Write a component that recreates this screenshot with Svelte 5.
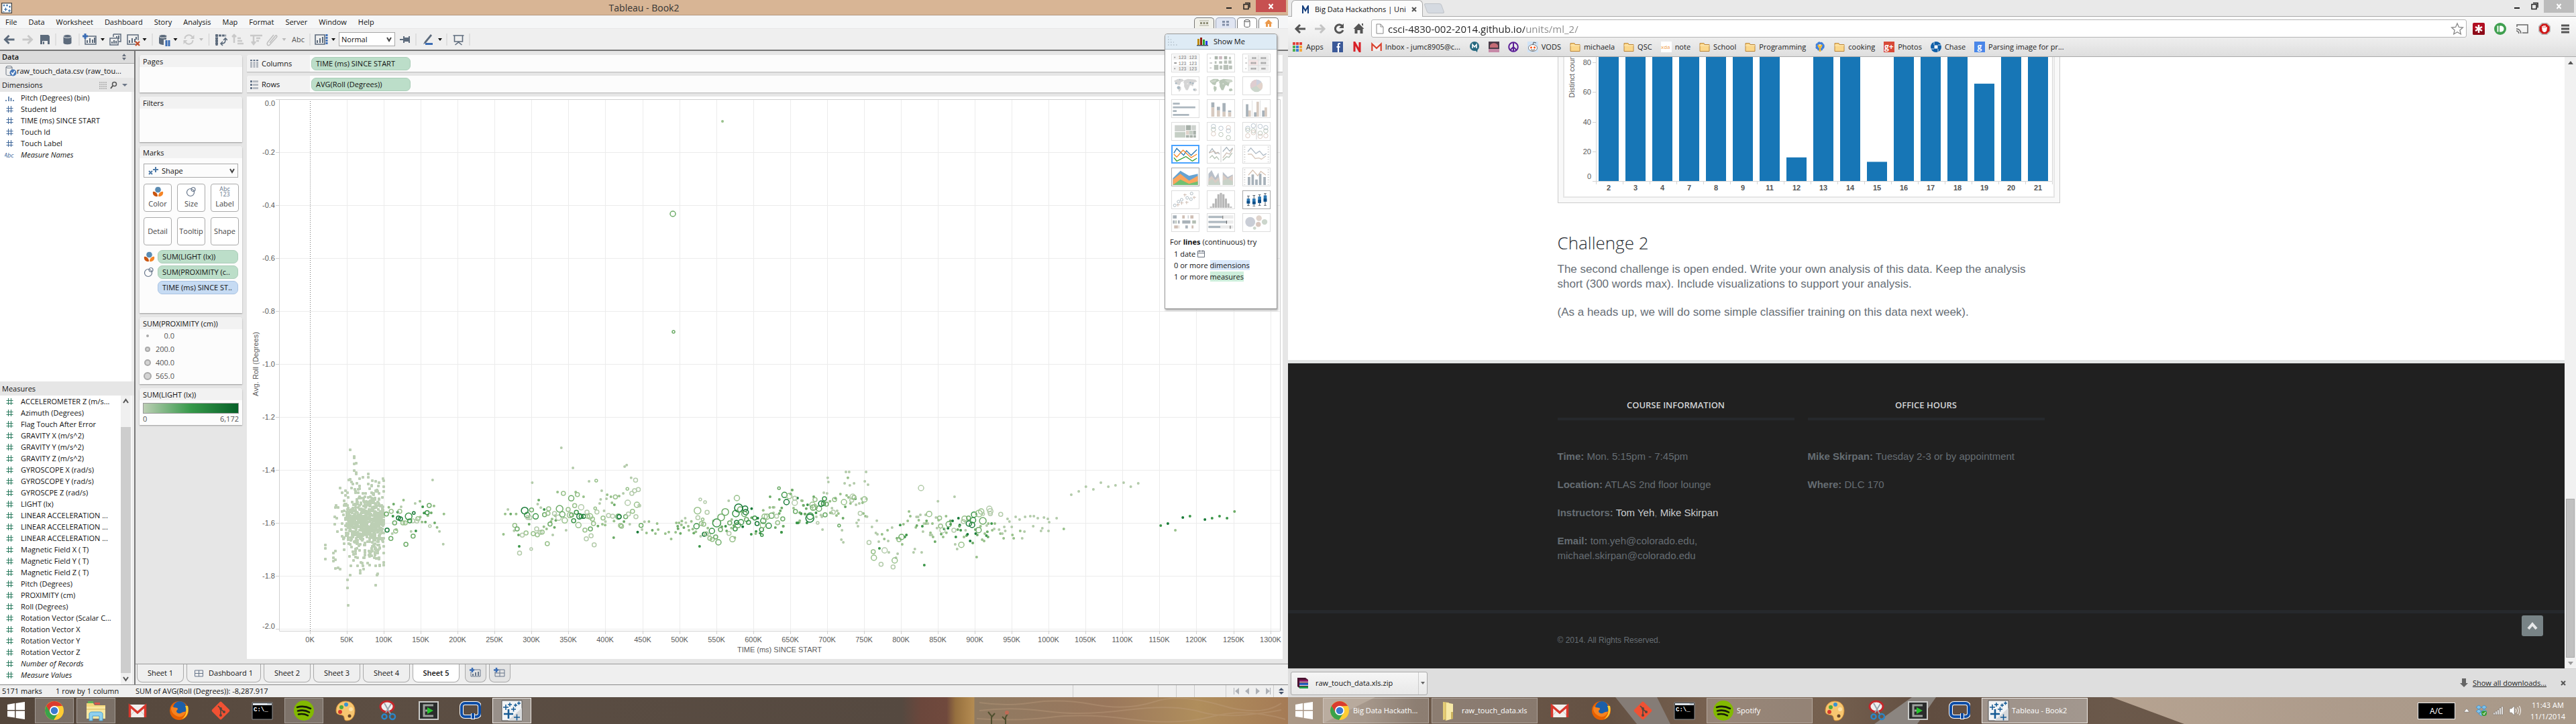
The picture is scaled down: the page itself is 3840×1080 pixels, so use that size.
<script>
  const menus = ['File', 'Data', 'Worksheet', 'Dashboard', 'Story', 'Analysis', 'Map', 'Format', 'Server', 'Window', 'Help'];
  const toolsLeft = [
    ['back', 29], ['forward', 23], ['save', 30], ['sep', 2], ['cylinder', 33], ['sep', 2], ['newsheet', 30], ['caret', 8],
    ['duplicate', 30], ['clear', 24], ['caret', 9], ['sep', 14], ['pause', 22], ['caret', 11], ['refresh', 29], ['caretoff', 8],
    ['sep', 15], ['swap', 20], ['asc', 32], ['desc', 22], ['clip', 24], ['caretoff', 13], ['abc', 29], ['sep', 6], ['fit', 28], ['caret', 8]
  ];
  const toolsRight = [['pin', 30], ['sep', 2], ['pen', 32], ['caret', 6], ['sep', 14], ['present', 21], ['sep', 12]];

  const dimensions = [
    ['bars', 'Pitch (Degrees) (bin)'], ['#', 'Student Id'], ['#', 'TIME (ms) SINCE START'],
    ['#', 'Touch Id'], ['#', 'Touch Label'], ['Abc', 'Measure Names']
  ];
  const measures = [
    'ACCELEROMETER Z (m/s...', 'Azimuth (Degrees)', 'Flag Touch After Error', 'GRAVITY X (m/s^2)', 'GRAVITY Y (m/s^2)',
    'GRAVITY Z (m/s^2)', 'GYROSCOPE X (rad/s)', 'GYROSCOPE Y (rad/s)', 'GYROSCPE Z (rad/s)', 'LIGHT (lx)',
    'LINEAR ACCELERATION ...', 'LINEAR ACCELERATION ...', 'LINEAR ACCELERATION ...', 'Magnetic Field X ( T)',
    'Magnetic Field Y ( T)', 'Magnetic Field Z ( T)', 'Pitch (Degrees)', 'PROXIMITY (cm)', 'Roll (Degrees)',
    'Rotation Vector (Scalar C...', 'Rotation Vector X', 'Rotation Vector Y', 'Rotation Vector Z',
    'Number of Records', 'Measure Values'
  ];
  const legend = [['0.0', 1], ['200.0', 3], ['400.0', 4], ['565.0', 5]];
  const sheets = ['Sheet 1', 'Dashboard 1', 'Sheet 2', 'Sheet 3', 'Sheet 4', 'Sheet 5'];

  const shades = ['#b3cbaa', '#98c18b', '#6dac68', '#3c9649', '#177a37'];
  const parse = (s) => s.trim().split(/[;\s]+/).filter(Boolean).map((p) => p.split(',').map(Number));
  const early = (x) => 400 + x / 1.96;
  const late = (x) => 1150 + x / 2.063;
  const plotY = (y) => 640 + y / 3;

  const earlyRings = parse(`345,380,3,2;359,368,3,1;384,368,3,1;410,391,5,3;380,398,3,4;386,402,3,4;425,376,2,4;470,342,3,2;464,374,3,3;437,401,3,1;434,412,3,0;422,411,3,0;413,411,3,3;369,420,3,2;393,420,3,1;400,420,3,1;347,452,3,4;372,457,3,1;358,490,3,2;423,479,3,2;402,516,3,2;472,434,2,0
    749,365,5,4;769,362,3,2;756,385,4,3;781,391,4,3;758,396,3,0;764,397,3,0;720,431,3,1;727,447,3,2;753,465,3,1;742,475,3,0;734,555,3,0;768,537,2,0;774,468,3,1;784,447,3,0;786,473,3,1;794,463,3,0;800,461,3,1;815,513,3,1;823,425,3,2;807,383,3,2;817,377,3,1;819,357,3,1;836,378,3,0;848,397,4,0;851,357,5,2;859,382,4,2;862,288,3,1;885,310,4,2;866,409,4,1;876,360,3,1;881,385,4,1;886,385,3,2;892,410,3,3;895,343,3,1;900,373,3,3;903,293,3,1;909,391,4,4;914,391,3,3;906,430,4,1;914,350,4,0;921,391,3,4;931,372,3,0;933,391,3,1;940,391,4,1;925,452,3,1;941,447,3,2;929,491,3,0;943,478,3,0;952,518,3,0;947,403,3,1;950,423,3,1;955,355,2,1;960,371,3,0;978,398,3,1;994,387,3,0;1006,390,3,0;1014,304,3,1;1023,392,4,2;1025,392,3,4;1029,431,3,1;1032,435,3,1;1044,392,3,2;1050,330,4,0;1049,268,2,1;1052,380,3,0;1062,288,3,0;1064,368,3,1;1070,276,3,0;1073,229,3,0;1081,271,3,0;1077,339,4,1;1084,343,2,0;1074,392,3,0;1089,431,3,2;958,231,2,1
    1254,365,5,1;1255,397,3,0;1282,373,3,0;1262,315,2,0;1276,327,2,0;1251,435,4,3;1265,423,3,1;1269,404,2,1;1272,426,3,1;1274,471,3,4;1279,469,3,1;1288,472,2,0;1290,489,3,1;1297,494,3,1;1296,456,4,3;1307,483,3,2;1315,507,4,2;1310,420,6,3;1321,450,3,2;1323,395,5,2;1335,371,5,2;1346,467,3,0;1348,420,3,2;1356,493,4,1;1364,447,3,3;1366,378,5,3;1369,309,4,1;1368,418,3,4;1374,353,6,4;1379,360,4,2;1372,430,4,2;1381,417,4,3;1393,356,4,4;1395,372,4,4;1391,380,4,2;1397,405,3,2;1403,418,3,3;1421,398,3,3;1428,423,3,4;1441,450,3,3;1442,475,2,3;1445,430,4,1;1446,411,4,3;1450,392,4,1;1457,392,4,1;1462,433,4,3;1470,388,4,2;1485,390,3,0;1488,419,3,1;1503,402,3,2;1492,265,2,2;1508,295,4,3;1514,327,4,4;1522,300,4,1;1538,310,3,0;1538,330,4,0;1540,369,3,2`);
  const earlyDots = parse(`366,336,2;395,318,1;388,348,0;352,350,1;364,390,3;378,372,4;429,333,0;443,323,1;451,348,3;455,376,3;476,375,2;484,344,1;513,380,1;486,420,2;493,440,1;500,458,0;511,515,0;480,228,0;449,416,1;459,416,2;431,456,3;417,458,0;362,468,0;374,450,1;444,394,1;466,388,1
    692,380,1;708,380,2;724,380,1;700,360,0;687,471,1;718,455,0;731,474,2;733,525,3;762,426,2;771,240,0;790,318,2;787,336,0;796,352,0;806,360,3;838,388,1;845,282,1;829,403,1;826,414,1;840,409,2;836,440,2;831,474,0;813,447,1;805,437,1;856,84,0;890,174,0;898,282,1;870,453,0;921,303,1;937,234,0;971,315,0;974,276,0;968,333,0;988,312,0;990,294,1;1001,303,1;1004,330,1;1011,339,2;1025,300,1;1037,288,0;981,366,0;976,426,1;984,430,1;985,414,0;963,434,2;1010,412,1;1009,486,2;1039,414,2;1056,426,0;1041,168,0;1047,161,0;1060,218,0;1079,461,4;1092,450,0;1099,415,0;1112,414,1;1105,465,1;1122,453,2;1131,468,1;1136,423,1;1139,450,1;1160,468,1;1170,461,1;1177,492,1;1190,462,1;1197,446,2;1204,467,2
    1218,399,0;1208,412,1;1200,420,1;1192,420,1;1196,435,2;1207,429,1;1214,441,2;1220,419,0;1227,435,1;1229,453,1;1236,413,1;1240,448,1;1243,466,2;1249,460,1;1263,480,0;1260,525,3;1284,443,1;1300,411,0;1345,321,0;1325,437,2;1336,435,3;1339,456,2;1353,443,1;1363,486,1;1360,432,2;1354,405,1;1386,437,4;1412,356,4;1412,397,2;1430,399,4;1411,471,3;1425,458,3;1437,466,3;1424,468,1;1446,364,1;1465,351,1;1478,350,0;1476,375,0;1466,303,2;1493,315,2;1500,353,2;1496,366,2;1499,462,2;1505,435,1;1530,273,1;1526,290,2;1546,309,4;1545,420,3;1551,418,1;1558,320,1;1564,342,1;1568,380,2;1557,380,1`);
  const lateRings = parse(`118,399,6,4;119,390,5,3;126,339,4,1;128,352,4,2;133,350,4,1;134,316,3,1;146,356,4,2;153,334,4,4;160,334,3,3;163,312,3,3;169,336,3,2;165,384,3,2;190,372,3,0;142,420,2,0;194,316,3,1;208,432,2,2;223,327,4,1;250,303,4,0;247,318,3,0;254,306,3,1;273,377,3,0;286,315,4,1;300,508,3,0;313,549,3,1;315,576,4,1;348,543,4,0;337,605,3,0;379,588,4,1;374,617,3,0;392,495,3,1;400,483,4,2;460,264,4,0;485,380,4,1;517,398,3,1;520,434,3,1;526,453,4,0;545,426,4,2;561,453,3,0;584,518,4,1;590,414,3,0;594,401,4,1;606,398,3,2;607,423,4,4;617,429,4,4;620,408,4,3;623,383,4,3;638,378,5,1;637,452,4,2;650,411,5,2;645,369,4,1;651,380,2,0;670,357,4,0;673,368,4,0;673,379,3,0;705,382,3,0`);
  const lateDots = parse(`111,339,3;107,356,2;130,303,2;95,321,1;98,341,2;103,380,2;91,378,3;87,374,2;109,420,3;78,420,3;82,420,3;87,410,1;137,375,3;138,393,0;152,385,0;155,393,0;157,450,0;161,285,0;171,288,0;173,218,0;175,237,0;180,323,1;186,354,0;181,375,1;185,376,1;200,387,1;202,366,0;206,378,1;197,310,2;212,291,1;220,399,2;217,453,0;215,495,0;221,507,0;225,243,0;229,192,0;239,192,0;235,218,1;241,252,0;254,243,0;231,297,1;237,306,1;243,333,1;227,348,2;258,312,3;260,339,0;262,420,0;268,407,0;266,435,0;270,333,0;277,312,0;280,330,1;283,378,1;289,390,1;294,392,0;291,192,0;287,234,0;297,249,0;292,312,0;309,438,0;324,410,0;321,465,0;326,471,0;330,504,0;332,534,3;340,471,1;347,492,1;357,453,1;359,501,0;361,552,0;371,441,0;383,576,0;388,558,0;386,489,2;396,430,3;406,426,1;402,516,1;410,483,3;415,474,3;419,411,1;423,369,1;427,390,1;437,552,0;441,537,0;462,552,0;470,609,3;444,440,1;447,432,2;446,393,0;451,393,0;458,384,0;453,408,1;464,435,3;466,459,0;469,423,0;474,384,0;477,411,2;475,423,1;481,423,0;489,464,1;488,474,0;493,474,0;497,483,1;495,423,1;503,504,2;506,396,0;512,323,0;509,443,0;514,408,1;522,470,2;528,483,1;531,447,3;537,390,1;538,464,1;543,444,4;551,426,3;550,411,2;557,411,4;563,303,0;565,516,0;567,483,3;571,537,0;575,399,4;579,430,4;578,435,2;582,453,3;573,450,2;592,483,1;597,453,0;600,477,2;603,471,4;611,501,4;619,510,2;627,450,2;628,468,4;633,474,2;631,573,1;643,435,1;648,495,1;654,501,1;656,468,1;661,477,3;664,460,2;666,483,2;662,432,0;667,423,1;677,423,3;687,423,1;679,453,1;685,447,0;700,450,0;704,468,1;710,468,0;714,489,1;716,438,0;719,456,0;726,402,0;732,414,0;739,438,0;741,474,1;745,489,1;751,393,0;763,405,0;765,456,1;771,489,0;780,393,0;778,459,0;796,390,0;807,390,0;805,435,0;819,399,0;838,396,0;833,444,0;829,456,0;850,402,0;854,417,0;852,456,0;877,399,0;899,447,1;922,294,0;945,279,0;967,258,0;990,270,0;1013,240,0;1036,258,0;1058,252,0;1083,240,0;1105,258,0;1128,243,0;1197,432,3;1219,423,4;1242,453,1;1265,396,4;1287,390,3;1333,405,4;1355,399,3;1378,390,3;1401,399,3;1424,369,2;5,350,1;24,378,2;36,435,2;12,441,2;31,462,3;64,273,2;68,354,1`);

  const rings = [
    ...earlyRings.map(([x, y, r, s]) => [early(x), plotY(y), r, s]),
    ...lateRings.map(([x, y, r, s]) => [late(x), plotY(y), r, s]),
    [1003, 319, 4, 2], [1004, 495, 2, 2]
  ];
  const dots = [
    ...earlyDots.map(([x, y, s]) => [early(x), plotY(y), s]),
    ...lateDots.map(([x, y, s]) => [late(x), plotY(y), s]),
    [1077, 181, 1]
  ];

  const outliers = parse(`239,92;251,122;251,128;251,156;257,152;251,185;257,195;257,202;235,228;239,225;243,264;266,222;276,216;292,201;292,215;335,222;337,230;337,258;337,278;304,230;314,234;323,240;167,520;167,534;167,581;232,675;232,711;233,789;239,654;314,699;318,654;319,648;268,632;268,645;196,624;204,620;210,627;190,554;190,575;190,592;196,546;196,585;198,342;203,350;196,350;194,392;194,425;200,400;202,460;337,525;337,555;337,596;337,608;278,626;314,612`);
  let seed = 20141;
  const rand = () => (seed = (seed * 16807) % 2147483647) / 2147483647;
  const bell = () => rand() + rand() + rand() + rand() - 2;
  const cluster = outliers.map(([x, y]) => [Math.round(early(x)), Math.round(plotY(y))]);
  for (let i = 0; i < 440; i++) {
    const x = 214 + Math.pow(rand(), 0.8) * 124;
    cluster.push([Math.round(early(x)), Math.round(plotY(412 + bell() * 88))]);
  }
  for (let i = 0; i < 300; i++) {
    const x = 206 + Math.sqrt(rand()) * 120;
    const y = 430 + bell() * 220;
    if (y > 232 && y < 612) cluster.push([Math.round(early(x)), Math.round(plotY(y))]);
  }

  const xTicks = Array.from({ length: 27 }, (_, i) => ({ x: Math.round(462 + i * 55.06), label: `${i * 50}K` }));
  const yTicks = Array.from({ length: 11 }, (_, i) => ({ y: Math.round(148 + i * 79), label: i ? (-i * 0.2).toFixed(1) : '0.0' }));

  const bars = [[2, 100], [3, 100], [4, 100], [7, 100], [8, 100], [9, 100], [11, 100], [12, 16], [13, 100], [14, 100], [15, 13], [16, 100], [17, 100], [18, 100], [19, 66], [20, 100], [21, 100]];

  const thumbs = ['text table', 'heat map', 'highlight table', 'symbol map', 'filled map', 'pie chart', 'horizontal bars', 'stacked bars', 'side-by-side bars', 'treemap', 'circle views', 'side-by-side circles', 'lines (continuous)', 'lines (discrete)', 'dual lines', 'area (continuous)', 'area (discrete)', 'dual combination', 'scatter plot', 'histogram', 'box plot', 'gantt', 'bullet graph', 'packed bubbles'];

  const bookmarks = [
    ['apps', 'Apps'], ['fb', ''], ['netflix', ''], ['gmail', 'Inbox - jumc8905@c...'], ['m', ''], ['photo', ''], ['peace', ''], ['reddit', 'VODS'],
    ['folder', 'michaela'], ['folder', 'QSC'], ['xda', 'note'], ['folder', 'School'], ['folder', 'Programming'], ['gear', ''],
    ['folder', 'cooking'], ['gplus', 'Photos'], ['chase', 'Chase'], ['google', 'Parsing image for pr...']
  ];

  const leftApps = [['chrome', 'open'], ['explorer', 'open'], ['gmail', ''], ['firefox', ''], ['git', ''], ['cmd', ''], ['spotify', 'open'], ['paint', ''], ['snip', ''], ['emu', ''], ['quick', ''], ['tableau', 'active']];
  const rightApps = [['chrome', 'open', 'Big Data Hackath...'], ['folder', 'open', 'raw_touch_data.xls'], ['gmail', ''], ['firefox', ''], ['git', ''], ['cmd', ''], ['spotify', 'open', 'Spotify'], ['paint', ''], ['snip', ''], ['emu', ''], ['quick', ''], ['tableau', 'active', 'Tableau - Book2']];
</script>

{#snippet tool(name, w)}
  <svg width={w} height="24" viewBox="{-w / 2} -12 {w} 24" fill="none" stroke="#5d6b7c" stroke-width="2">
    {#if name === 'back'}<path d="M7 0H-6M-1-6l-6 6 6 6" stroke-width="3" />
    {:else if name === 'forward'}<path d="M-7 0H6M1-6l6 6-6 6" stroke="#c9c9c9" stroke-width="3" />
    {:else if name === 'save'}<path d="M-7-7H5l2 2V7H-7z" fill="#5d6b7c" stroke="none" /><path d="M-4 2h8v5h-8z" fill="#efefef" stroke="none" /><path d="M-2 3v4" />
    {:else if name === 'sep'}<path d="M0-9V9" stroke="#cfcfcf" stroke-width="1" />
    {:else if name === 'cylinder'}<path d="M-6-5v10c0 3 12 3 12 0V-5" fill="#5d6b7c" stroke="none" /><ellipse cy="-5" rx="6" ry="2.5" fill="#5d6b7c" stroke="#efefef" stroke-width="1" />
    {:else if name === 'newsheet'}<path d="M-4-5H9V7H-7V-1" stroke-width="1.5" /><path d="M-4 5V1M0 5V-2M4 5V0M7 5V-3" /><path d="M-7-9v8M-11-5h8" stroke="#3a6cb4" stroke-width="3" />
    {:else if name === 'duplicate'}<path d="M-3-8H8V3H5M-3-8v4M-8-2H4V8H-8z" stroke-width="1.5" /><path d="M-5 6V3M-2 6V1M1 6V2M2-3V-5M5-1V-6" />
    {:else if name === 'clear'}<path d="M3 7H-9V-7H7V1" stroke-width="1.5" /><path d="M-6 5V1M-2 5V-2M2 4V-1M4 0V-4" /><path d="M3 3l6 6M9 3l-6 6" stroke="#c04f2c" stroke-width="2.4" />
    {:else if name === 'caret'}<path d="M-3-2H3L0 2z" fill="#111" stroke="none" />
    {:else if name === 'caretoff'}<path d="M-3-2H3L0 2z" fill="#bbb" stroke="none" />
    {:else if name === 'pause'}<path d="M-8-5V5c0 2 4 3 7 3V-5" fill="#5d6b7c" stroke="none" /><path d="M-8-5h11v5H-4z" fill="#5d6b7c" stroke="none" /><ellipse cx="-2" cy="-5" rx="6" ry="2.5" fill="#5d6b7c" stroke="#efefef" stroke-width="1" /><path d="M3 1v9M7 1v9" stroke="#3a6cb4" stroke-width="3" />
    {:else if name === 'refresh'}<path d="M-6-1a6 6 0 0 1 11-3M6 1a6 6 0 0 1-11 3" stroke="#c9c9c9" /><path d="M8-7v6H2zM-8 7V1h6z" fill="#c9c9c9" stroke="none" />
    {:else if name === 'swap'}<path d="M-8-6H8M-6-8V9M-8-2H-4M-8 2H-4M-8 6H-4" stroke-dasharray="4 1" stroke-width="3" /><path d="M1 6c6 0 6-3 6-7M4 1l3-3 3 3M3 3L0 6l3 3" stroke-width="1.6" />
    {:else if name === 'asc'}<path d="M-6-7V5M-9-4l3-3 3 3M-1-2H4M-1 2H6M-1 6H8" stroke="#c9c9c9" stroke-width="2.5" />
    {:else if name === 'desc'}<path d="M-4-7V7M-7 3l3 4 3-4M-9-6H9M0-2H6M0 2H4" stroke="#c9c9c9" stroke-width="2.5" />
    {:else if name === 'clip'}<path d="M-3 5L5-5c2-3 4 0 2 2L-3 8c-3 2-5-1-3-4L3-7" stroke="#c0c0c0" stroke-width="1.6" />
    {:else if name === 'abc'}<text x="0" y="4" text-anchor="middle" class="t11" fill="#555" stroke="none">Abc</text>
    {:else if name === 'fit'}<path d="M-9-7H5V7H-9z" stroke-width="1.6" /><path d="M-6 5V1M-2 5V-2M2 5V-4" /><path d="M8-8V8" stroke="#3a6cb4" stroke-width="3" stroke-dasharray="3 1" />
    {:else if name === 'pin'}<path d="M-8 0H-2M-2-5V5M6-5V5M-2-1H6M-2 1.5H6" /><path d="M-1-3H5V3H-1z" fill="#5d6b7c" stroke="none" />
    {:else if name === 'pen'}<path d="M5-8L-4 3l-2 4 4-2L7-6z" fill="#5d6b7c" stroke="none" /><path d="M-3 6.500H8" stroke="#3a6cb4" stroke-width="3" />
    {:else if name === 'present'}<path d="M-8-6H8M-6-6V3H6V-6M0 3v2M-5 8l5-4 5 4" stroke-width="1.6" />{/if}
  </svg>
{/snippet}

{#snippet thumb(i)}
  <svg viewBox="0 0 42 28" width="100%" height="100%" fill="none" aria-hidden="true">
    {#if i === 0}
      <path d="M1 1h40v8H1zM1 18h40v9H1z" fill="#f3f3f3" /><path d="M3 5h2M3 14h4M3 23h2" stroke="#999" stroke-width="2" />
      {#each [8, 17, 26] as y}<text x="10" y={y} class="t7" fill="#777">123 123</text>{/each}
    {:else if i === 1}
      <path d="M3 6h2M3 14h4M3 22h3" stroke="#ccc" stroke-width="2" /><path d="M11 3h5v5h-5zM26 3h5v5h-5z" fill="#a9b3a9" /><path d="M18 3h5v5h-5z" fill="#cbb9bf" /><path d="M34 4h3v4h-3zM11 11h3v4h-3zM18 11h5v4h-5zM26 10h5v5h-5zM33 10h5v5h-5zM10 17h7v8h-7zM19 18h4v6h-4zM25 17h8v8h-8zM34 18h5v6h-5z" fill="#b9c1b9" />
    {:else if i === 2}
      <path d="M8 1h33v26H8z" fill="#efefef" /><path d="M8 9h16v9H8z" fill="#f6e7e7" /><path d="M8 1v26M24 1v26M8 9h33M8 18h33" stroke="#ddd" />
      <path d="M3 6h2M3 14h3M3 23h2" stroke="#ccc" stroke-width="2" /><path d="M14 6h7M28 6h9M12 14h9M28 14h9M12 23h9M29 23h7" stroke="#999" stroke-width="3" stroke-dasharray="1.500 .7" />
    {:else if i === 3 || i === 4}
      <g fill={i === 3 ? '#d5d5d5' : '#b9c7b7'}>
        <path d="M3 6l6-3 7 0 3 3-5 2-2 5-4-1-4-4zM10 14l4 2 0 4-3 4-2-6zM19 5l6-2 12 1 3 3-5 2-2 6-3-2-3 1-2-4-5 2-2-3zM19 11l6 0 3 3-3 7-3 0-3-6zM34 19l4-1 2 3-3 2-3-1z" />
      </g>
      {#if i === 3}<g fill="#a9b8c2"><circle cx="6" cy="10" r="1.500" /><circle cx="10" cy="17" r="2.500" /><circle cx="29" cy="9" r="1.500" /><circle cx="33" cy="10" r="1.500" /><circle cx="35" cy="20" r="1.500" /><circle cx="12" cy="4" r="1" /></g>
      {:else}<path d="M27 5l12-1-1 4-6 1zM4 6l10-2-2 4-6 1z" fill="#cdd6ca" />{/if}
    {:else if i === 5}
      <circle cx="21" cy="14" r="10" fill="#ccd6cc" /><path d="M21 14V4a10 10 0 0 1 8 4z" fill="#cdd1dd" /><path d="M21 14l8-6a10 10 0 0 1-1 13z" fill="#e3d3cb" /><path d="M21 14l-9 4a10 10 0 0 1 9-14z" fill="#dfcdd0" />
    {:else if i === 6}
      <path d="M1 6h11M1 12h36M1 18h6M1 24h26" stroke="#abb6be" stroke-width="3" />
    {:else if i === 7}
      <path d="M8 4v8M17 11v6M26 5v14M35 17v3" stroke="#a7b1b9" stroke-width="5" /><path d="M8 12v15M17 17v10M26 19v8M35 20v7" stroke="#d8cbc1" stroke-width="5" />
    {:else if i === 8}
      <path d="M6 7v20M19 20v7M32 17v10" stroke="#a7b1b9" stroke-width="4" /><path d="M10 17v10M23 3v24M36 12v15" stroke="#d8cbc1" stroke-width="4" /><path d="M14 1v26M27 1v26" stroke="#ddd" />
    {:else if i === 9}
      <path d="M4 4h17v10H4zM31 4h7v8h-7zM31 13h3v6h-3z" fill="#ced2ce" /><path d="M4 15h17v9H4zM27 13h5v6h-5z" fill="#c5cfc5" /><path d="M22 4h8v8h-8zM22 20h5v4h-5zM28 20h5v4h-5zM34 13h4v6h-4zM34 20h4v4h-4z" fill="#a7b0a9" /><path d="M22 13h5v6h-5z" fill="#ded1c9" />
    {:else if i === 10 || i === 11}
      {#each i === 10 ? [[9, 6], [9, 11], [9, 18], [21, 9], [21, 19], [33, 8], [33, 13], [33, 24]] : [[7, 9], [7, 12], [7, 21], [16, 5], [16, 13], [16, 16], [27, 6], [27, 17], [27, 22], [36, 8], [36, 13], [36, 21]] as [x, y], k}
        <circle cx={x} cy={y} r="3.500" stroke={['#b7c3cd', '#b7c3b4', '#d9c8bf'][k % 3]} />
      {/each}
      {#if i === 11}<path d="M21 1v26" stroke="#ccc" />{/if}
    {:else if i === 12}
      <path d="M1 12L6 4l12 12 5-8 8 8L41 6" stroke="#2e7bb4" stroke-width="1.600" /><path d="M1 14l5 5L17 7l14 13 10-6" stroke="#f58b2c" stroke-width="1.600" /><path d="M1 20l5 6 16-8 11 8 8-5" stroke="#3aa03a" stroke-width="1.600" />
    {:else if i === 13}
      <path d="M2 12l5-7 5 8 4-2 3 3M24 10l6-7 5 6 5-5" stroke="#a9b5bd" stroke-width="1.400" /><path d="M2 12l8-3 4 4 4-2M24 20l6-8 5 2 5-9" stroke="#cdbfb5" stroke-width="1.400" /><path d="M3 20l4-4 4 5 3-3 4 5M24 24l6-6 4 1 5-7" stroke="#b4c2b4" stroke-width="1.400" /><path d="M21 1v26" stroke="#ccc" />
    {:else if i === 14}
      <path d="M7 10l5-6 8 9 6-4 6 7 5-3" stroke="#b0bbc6" stroke-width="1.400" /><path d="M7 14l6 0 6 7 6-1 4 2 7-5" stroke="#d8c8bc" stroke-width="1.400" /><path d="M2 2v25M40 2v25" stroke="#bbb" stroke-width="2" stroke-dasharray="1 3" />
    {:else if i === 15}
      <path d="M1 16L13 4l14 8 14-3v18H1z" fill="#66a3d2" /><path d="M1 18L13 9l14 11 14-8v15H1z" fill="#fba55d" /><path d="M1 27l12-9 14 7 14-4v6z" fill="#72bf72" />
    {:else if i === 16}
      <path d="M1 27V9l5-6 6 12 5-8 3 20zM24 6l8 8 8-4v17H24z" fill="#b9c0c9" /><path d="M1 27V17l5-5 6 7 5-5 3 13zM24 10l8 7 8-6v16H24z" fill="#d9ccc4" /><path d="M1 27v-5l6-5 5 7 5-5 3 8zM24 20l8-3 8 4v6H24z" fill="#c8d2c8" />
    {:else if i === 17}
      <path d="M9 14v13M15 10v17M21 18v9M27 9v18M34 14v13" stroke="#a7b1b9" stroke-width="4" /><path d="M8 11l7-8 8 9 5-7 8 6" stroke="#d8c3b3" stroke-width="1.400" /><path d="M2 2v25M40 2v25" stroke="#bbb" stroke-width="2" stroke-dasharray="1 3" />
    {:else if i === 18}
      <g stroke="#a9b5bd">{#each [[4, 23], [10, 17], [15, 14], [24, 11], [30, 13], [31, 4]] as [x, y]}<circle cx={x} cy={y} r="2.200" />{/each}</g><path d="M7 22h5M9 20v5M13 19h5M15 17v5M21 18h5M23 16v5M18 6h5M20 4v5M33 10h5M35 8v5" stroke="#cbb8ad" />
    {:else if i === 19}
      <path d="M5 25v2M9 20v7M13 12v15M17 5v22M21 3v24M25 5v22M29 12v15M33 20v7M37 25v2" stroke="#b7b7b7" stroke-width="3.400" />
    {:else if i === 20}
      <path d="M8 8v16M17 7v16M26 6v17M35 4v19M6 8h4M6 23h4M15 7h4M15 24h4M24 6h4M24 23h4M33 4h4M33 23h4" stroke="#4a5561" /><path d="M8 12v8M17 12v9M26 9v10M35 7v10" stroke="#2b77b3" stroke-width="5" /><path d="M8 16v4M17 17v4M26 14v5M35 12v5" stroke="#0c4d86" stroke-width="5" />
    {:else if i === 21}
      <path d="M1 5h6M25 5h1M1 13h3M9 13h3M16 13h13M21 21h4" stroke="#a9b2b9" stroke-width="5" /><path d="M16 5h4M29 5h5M3 21h8M31 21h3" stroke="#cfbfb5" stroke-width="5" stroke-dasharray="6 1" /><path d="M5 13h2M32 13h6" stroke="#b4bfb4" stroke-width="5" />
    {:else if i === 22}
      <path d="M1 5h40M1 13h40M1 21h40" stroke="#ececec" stroke-width="5" /><path d="M1 5h22M1 13h30M1 21h19" stroke="#abb6be" stroke-width="3" /><path d="M24 3v5M30 11v5M36 19v5" stroke="#555" />
    {:else}
      <circle cx="11" cy="13" r="8" fill="#c9cdd6" /><circle cx="25" cy="7" r="4.500" fill="#e0d4cc" /><circle cx="24" cy="17" r="4" fill="#d8c7bf" /><circle cx="34" cy="13" r="4.500" fill="#ccd6cc" /><circle cx="18" cy="23" r="2.500" fill="#ccd6cc" />
    {/if}
  </svg>
{/snippet}

{#snippet app(name)}
  <svg width="32" height="32" viewBox="0 0 32 32" fill="none" aria-hidden="true">
    {#if name === 'chrome'}
      <circle cx="16" cy="16" r="14" fill="#fc3" /><path d="M3.900 9A14 14 0 0 1 28.100 9L16 9.500 10 20z" fill="#da3b2f" /><path d="M3.900 9A14 14 0 0 0 15 30l7-11-6 3-6-3z" fill="#3aa24a" /><circle cx="16" cy="16" r="7" fill="#fff" /><circle cx="16" cy="16" r="5.300" fill="#3b7ad0" />
    {:else if name === 'explorer'}
      <path d="M2 5h10l2 3h16v20H2z" fill="#f3d77c" /><path d="M4 2h8v3H4z" fill="#5db158" /><path d="M14 4h8v3h-8z" fill="#d9534a" /><path d="M2 10h28v18H2z" fill="#f8e7a0" /><path d="M2 14h28" stroke="#d8b65a" /><path d="M6 31V21c0-2 2-3 4-3h12c2 0 4 1 4 3v10h-5v-7H11v7z" fill="#8fd0ee" stroke="#4a9fcf" />
    {:else if name === 'folder'}
      <path d="M8 3l9 1v24l-9 2z" fill="#e5cd76" /><path d="M12 4l11 2v22l-11 3z" fill="#f7e9a6" /><path d="M12 4v27" stroke="#c9ac53" /><path d="M20 18h3v10l-3 1z" fill="#cbb25e" />
    {:else if name === 'gmail'}
      <path d="M3 7h26v19H3z" fill="#f2f0ee" /><path d="M3 26l9-10M29 26l-9-10" stroke="#c9c4c0" /><path d="M4.500 26V9l11.500 10L27.500 9v17" stroke="#d8372c" stroke-width="3.500" />
    {:else if name === 'firefox'}
      <circle cx="16" cy="16" r="14" fill="#e66000" /><circle cx="17" cy="12" r="10" fill="#1c5fa8" /><path d="M5 9c2 3 5 2 8 3 3 2-1 3-1 5s3 4 6 3c3-1 4-3 8-2-2 5-6 8-11 7S4 19 4 13z" fill="#f58220" /><path d="M29 9c2 8-1 17-9 20 7-6 8-13 5-20z" fill="#ffcb2f" />
    {:else if name === 'git'}
      <rect x="6" y="6" width="20" height="20" rx="2" transform="rotate(45 16 16)" fill="#f05133" /><path d="M12 9l4 4v10M16 14l5 4" stroke="#54463c" stroke-width="1.700" /><g fill="#54463c"><circle cx="16" cy="13" r="2" /><circle cx="16" cy="23" r="2" /><circle cx="21" cy="18" r="2" /></g>
    {:else if name === 'cmd'}
      <path d="M1 4h30v25H1z" fill="#000" stroke="#8a8d90" /><path d="M2 5h28v3H2z" fill="#dfe4ea" /><path d="M24 6h1M26 6h1M28 6h1" stroke="#345" /><text x="3" y="17" class="mono" fill="#fff">C:\_</text>
    {:else if name === 'spotify'}
      <circle cx="16" cy="16" r="15" fill="#82b900" /><path d="M6 11c7-2 14-1 20 2M7 16.500c6-1.500 12-1 17 2M8 21.500c5-1 9-.6 14 1.800" stroke="#141a08" stroke-width="2.600" stroke-linecap="round" />
    {:else if name === 'paint'}
      <path d="M16 2c9 0 14 6 14 14 0 9-5 15-12 15-5 0-3-5-5-7-3-3-11 0-11-8C2 8 8 2 16 2z" fill="#f7c670" stroke="#d28d35" /><circle cx="17" cy="7" r="3" fill="#3a93d0" /><circle cx="10" cy="11" r="3" fill="#53a93a" /><circle cx="8" cy="18" r="3" fill="#d53a2c" /><circle cx="22" cy="24" r="2.500" fill="#6b4a2a" /><circle cx="24" cy="14" r="3" fill="#fbe2a7" />
    {:else if name === 'snip'}
      <ellipse cx="16" cy="10" rx="10" ry="8" fill="#f0eeee" stroke="#c4272b" stroke-width="3" /><path d="M12 5l9 16M22 6l-8 13" stroke="#9aa4ad" stroke-width="2" /><circle cx="12" cy="25" r="3.500" stroke="#2c86c7" stroke-width="2.500" /><circle cx="24" cy="25" r="4" stroke="#2c86c7" stroke-width="2.500" />
    {:else if name === 'emu'}
      <path d="M2 3h28v26H2z" fill="#2a2c2c" stroke="#c9cac8" stroke-width="2" /><path d="M23 8H9v16h14M11 16h6" stroke="#9ca09c" stroke-width="3" /><path d="M14 11l9 5-9 5z" fill="#25c52c" />
    {:else if name === 'quick'}
      <rect x="3" y="5" width="27" height="20" rx="5" stroke="#fff" stroke-width="6" /><rect x="3" y="5" width="27" height="20" rx="5" stroke="#0e4da4" stroke-width="4" /><path d="M20 20v9" stroke="#fff" stroke-width="6" /><path d="M20 20v8" stroke="#0e4da4" stroke-width="4" />
    {:else}
      <path d="M1 1h30v30H1z" fill="#f2f4f6" stroke="#555" /><path d="M31 12v19H10z" fill="#d7d9db" /><path d="M3 11h8M7 7v8M10 7h6M13 4v6M19 8h5M21.500 5.500v5M24 5h5M26.500 2.500v5M15 14h7M18.500 10.500v7M19 26h9M23.500 21.500v9" stroke="#155a94" stroke-width="1.500" /><path d="M4 21h14M11 14v14" stroke="#155a94" stroke-width="2.600" />
    {/if}
  </svg>
{/snippet}

{#snippet fav(name)}
  <svg width="16" height="16" viewBox="0 0 16 16" fill="none" aria-hidden="true">
    {#if name === 'apps'}
      {#each ['#e0403a', '#e0403a', '#e0403a', '#4caf50', '#3b7ad0', '#f2a73b', '#4caf50', '#3b7ad0', '#f2a73b'] as c, i}<rect x={(i % 3) * 5 + 1} y={Math.floor(i / 3) * 5 + 1} width="4" height="4" fill={c} />{/each}
    {:else if name === 'fb'}<path d="M0 0h16v16H0z" fill="#3b5998" /><path d="M12 3h-2Q9 3 9 5v11M6.500 8h5" stroke="#fff" stroke-width="2.200" />
    {:else if name === 'netflix'}<path d="M4 15V1l8 14V1" stroke="#d81f26" stroke-width="3" />
    {:else if name === 'gmail'}<path d="M0 2h16v12H0z" fill="#f3f1f0" /><path d="M1.300 14V3.500L8 10l6.700-6.500V14" stroke="#d8432f" stroke-width="2.200" />
    {:else if name === 'm'}<circle cx="8" cy="7" r="7" fill="#286a80" /><path d="M8 12l4 4 1-6z" fill="#286a80" /><path d="M5 10V4.500L8 8l3-3.500V10" stroke="#fff" stroke-width="1.600" />
    {:else if name === 'photo'}<path d="M0 0h16v16H0z" fill="#4a3b48" /><path d="M2 6c2-5 10-5 12 0v3H2z" fill="#c56b75" /><path d="M0 11h16v5H0z" fill="#c78aa8" />
    {:else if name === 'peace'}<circle cx="8" cy="8" r="6.800" stroke="#5b1e96" stroke-width="2" /><path d="M8 1v14M8 8l-5 5M8 8l5 5" stroke="#5b1e96" stroke-width="2" />
    {:else if name === 'reddit'}<path d="M0 0h16v16H0z" fill="#cfe3f7" /><ellipse cx="8" cy="9.500" rx="6.500" ry="5" fill="#fff" stroke="#777" /><circle cx="5.500" cy="9" r="1.400" fill="#ff4500" /><circle cx="10.500" cy="9" r="1.400" fill="#ff4500" /><path d="M5 12q3 2 6 0M8 5l1-4 4 1" stroke="#555" />
    {:else if name === 'folder'}<path d="M1 2.500h6l1 2h7v10H1z" fill="#fbd78b" stroke="#bd8637" /><path d="M1 6h14" stroke="#fdeabb" />
    {:else if name === 'xda'}<path d="M0 0h16v16H0z" fill="#fff" /><text x="0" y="11" class="t8" fill="#f0a04b">xda</text>
    {:else if name === 'gear'}<circle cx="8" cy="7" r="5" stroke="#3f7fdb" stroke-width="3.500" stroke-dasharray="3 1" /><circle cx="8" cy="7" r="4.500" stroke="#3f7fdb" stroke-width="3" /><path d="M5 5l3 4 3-4M8 8v7" stroke="#f3b62c" stroke-width="2.600" />
    {:else if name === 'gplus'}<path d="M0 0h16v16H0z" fill="#d84a38" /><text x="1" y="12" class="t12" fill="#fff">g+</text>
    {:else if name === 'chase'}<circle cx="8" cy="8" r="8" fill="#0f5fa8" /><path d="M5.500 5.500h5v5h-5z" fill="#fff" /><path d="M5 0v5M16 5h-5M11 16v-5M0 11h5" stroke="#fff" stroke-width=".8" />
    {:else}<path d="M0 0h16v16H0z" fill="#4a86e8" /><text x="4.500" y="12" class="t12" fill="#fff">g</text>{/if}
  </svg>
{/snippet}

{#snippet colorIcon()}
  <svg width="17" height="16" viewBox="0 0 17 16" aria-hidden="true"><path d="M1 8c3-1 7 2 7 7-5 1-8-3-7-7z" fill="#c9540f" /><path d="M16 8c-3-1-7 2-7 7 5 1 8-3 7-7z" fill="#f58426" /><circle cx="8.500" cy="5" r="4.800" fill="#5a8bb2" stroke="#fff" /></svg>
{/snippet}
{#snippet sizeIcon()}
  <svg width="16" height="16" viewBox="0 0 16 16" fill="none" stroke="#66758a" stroke-width="1.200" aria-hidden="true"><circle cx="7" cy="9" r="5.500" /><circle cx="11" cy="4.500" r="3" /></svg>
{/snippet}
{#snippet hash(kind, tone)}
  <svg width="14" height="14" viewBox="0 0 14 14" fill="none" stroke={tone} aria-hidden="true">
    {#if kind === 'bars'}<path d="M2 12v-2M6 12V5M9.500 12V7M13 12v-2" stroke-width="1.500" />
    {:else if kind === 'Abc'}<text x="-1" y="11" class="t9" fill={tone} stroke="none">Abc</text>
    {:else}<path d="M5.500 2v10M9.500 2v10M2.500 5.500h10M2.500 9.500h10" />{/if}
  </svg>
{/snippet}
{#snippet winLogo()}
  <svg width="28" height="28" viewBox="0 0 28 28" fill="#fff" aria-hidden="true"><path d="M1 5l11-2v10H1zM13.500 3L27 1v12H13.500zM1 14.500h11v10L1 23zM13.500 14.500H27V27l-13.500-2z" /></svg>
{/snippet}

<div class="desktop">
  <section class="monitor">
    <div class="window">
      <header class="titlebar">
        <span class="book"><svg width="16" height="16" viewBox="0 0 32 32" fill="none"><path d="M1 1h30v30H1z" fill="#fff" stroke="#444" stroke-width="3" /><path d="M5 8h6M8 5v6M14 8h6M17 5v6M22 12h6M25 9v6M8 20h10M13 15v10M20 24h8M24 20v8M5 27h4" stroke="#1f5fa0" stroke-width="2" /></svg></span>
        <h1>Tableau - Book2</h1>
        <div class="winbtns">
          <button aria-label="Minimize"><svg width="26" height="23" viewBox="0 0 26 23"><path d="M9 11h8v2H9z" fill="#222" /></svg></button>
          <button aria-label="Restore"><svg width="27" height="23" viewBox="0 0 27 23" fill="none" stroke="#222"><path d="M9 6.500h7v7H9z" stroke-width="1.500" /><path d="M11 4.500h7v7" stroke-width="1.500" /></svg></button>
          <button class="close" aria-label="Close"><svg width="45" height="18" viewBox="0 0 45 18"><path d="M19.500 6l6 7M25.500 6l-6 7" stroke="#fff" stroke-width="2" /></svg></button>
        </div>
      </header>
      <nav class="menubar">
        {#each menus as m}<button>{m}</button>{/each}
        <div class="modes">
          <button aria-label="Sheet sorter" class="sorter"><svg width="28" height="15" viewBox="0 0 28 15"><path d="M7 4h14M7 11h14" stroke="#a8a896" /><path d="M8 6h3v3H8zM12.500 6h3v3h-3zM17 6h3v3h-3z" fill="#8c8c74" /></svg></button>
          <button aria-label="Show Me" class="grid"><svg width="28" height="15" viewBox="0 0 28 15"><path d="M9 4h4v3H9zM15 4h4v3h-4zM9 8.500h4v3H9zM15 8.500h4v3h-4z" fill="#8390a8" /></svg></button>
          <button aria-label="Data sources"><svg width="28" height="15" viewBox="0 0 28 15" fill="none" stroke="#555"><path d="M10 4v8c0 2 8 2 8 0V4" /><ellipse cx="14" cy="4" rx="4" ry="1.500" /></svg></button>
          <button aria-label="Start page"><svg width="28" height="15" viewBox="0 0 28 15"><path d="M14 2l6 6h-2v5h-3V9h-2v4h-3V8H8z" fill="#ec9a4c" /></svg></button>
        </div>
      </nav>
      <div class="toolbar">
        {#each toolsLeft as [n, w]}{#if n === 'sep'}{@render tool(n, w)}{:else}<button aria-label={n}>{@render tool(n, w)}</button>{/if}{/each}
        <label class="fit"><select aria-label="Fit"><option>Normal</option></select><svg width="8" height="8" viewBox="0 0 8 8" fill="none"><path d="M1 1l3 5 3-5" stroke="#444" stroke-width="2" /></svg></label>
        {#each toolsRight as [n, w]}{#if n === 'sep'}{@render tool(n, w)}{:else}<button aria-label={n}>{@render tool(n, w)}</button>{/if}{/each}
      </div>

      <div class="body">
        <aside class="datapane">
          <h2>Data <svg width="8" height="12" viewBox="0 0 8 12"><path d="M1 5l3-4 3 4zM1 7l3 4 3-4z" fill="#666f7c" /></svg></h2>
          <div class="source"><svg width="17" height="16" viewBox="0 0 17 16" fill="none"><path d="M1 2v11c0 2 8 2 9 1V2" stroke="#6c7784" /><ellipse cx="5.500" cy="2" rx="4.500" ry="1.500" stroke="#6c7784" /><circle cx="11.500" cy="10.500" r="5" fill="#4778b8" /><path d="M9 10l2 3 3-5" stroke="#fff" stroke-width="1.500" /></svg><span>raw_touch_data.csv (raw_tou...</span></div>
          <h3>Dimensions <svg width="46" height="14" viewBox="0 0 46 14" fill="none"><path d="M2 3h12M2 6h12M2 9h12M2 12h12" stroke="#888" stroke-dasharray="2 1" /><circle cx="24.500" cy="5.500" r="3" stroke="#555" stroke-width="1.500" /><path d="M22 8l-3 4" stroke="#555" stroke-width="2" /><path d="M36 5h8l-4 4z" fill="#6d7787" /></svg></h3>
          <ul class="fields dims">
            {#each dimensions as [k, d]}<li class:calc={k === 'Abc'}>{@render hash(k, '#3d6699')}<span>{d}</span></li>{/each}
          </ul>
          <h3>Measures</h3>
          <div class="meas">
            <ul class="fields">
              {#each measures as m, i}<li class:calc={i > 22}>{@render hash('#', '#2a7b5f')}<span>{m}</span></li>{/each}
            </ul>
            <div class="scroll">
              <svg width="15" height="16" viewBox="0 0 15 16" fill="none"><path d="M4 11l3.500-5L11 11" stroke="#555" stroke-width="2" /></svg>
              <div class="thumb"></div>
              <svg width="15" height="17" viewBox="0 0 15 17" fill="none"><path d="M4 6l3.500 5L11 6" stroke="#555" stroke-width="2" /></svg>
            </div>
          </div>
        </aside>

        <main class="work">
          <div class="sheet">
            <div class="cards">
              <section class="card pages"><h4>Pages</h4></section>
              <section class="card filters"><h4>Filters</h4></section>
              <section class="card marks">
                <h4>Marks</h4>
                <label class="marktype"><svg width="16" height="14" viewBox="0 0 16 14" fill="none" stroke="#4d7aa8" stroke-width="2"><path d="M1 7l5 5M6 7l-5 5M11 1v8M7 5h8" /></svg><select aria-label="Mark type"><option>Shape</option></select><svg width="8" height="8" viewBox="0 0 8 8" fill="none"><path d="M1 1l3 5 3-5" stroke="#444" stroke-width="2" /></svg></label>
                <div class="markbtns">
                  <button>{@render colorIcon()}<span>Color</span></button>
                  <button>{@render sizeIcon()}<span>Size</span></button>
                  <button><span class="abc">Abc<br />123</span><span>Label</span></button>
                  <button>Detail</button><button>Tooltip</button><button>Shape</button>
                </div>
                <div class="encodings">
                  {@render colorIcon()}<button class="pill">SUM(LIGHT (lx))</button>
                  {@render sizeIcon()}<button class="pill">SUM(PROXIMITY (c..</button>
                  <i></i><button class="pill blue">TIME (ms) SINCE ST..</button>
                </div>
              </section>
              <section class="card prox"><h4>SUM(PROXIMITY (cm))</h4>
                <ul>{#each legend as [t, r]}<li><svg width="16" height="14" viewBox="0 0 16 14"><circle cx="8" cy="7" {r} fill="#d4d4d4" stroke="#a9a9a9" stroke-width="2" /></svg><span>{t}</span></li>{/each}</ul>
              </section>
              <section class="card light"><h4>SUM(LIGHT (lx))</h4>
                <div class="ramp"></div><p><span>0</span><span>6,172</span></p>
              </section>
            </div>
            <div class="view">
              <div class="shelf"><h4><svg width="12" height="14" viewBox="0 0 12 14"><path d="M0 1h3v2H0zM4.500 1h3v2h-3zM9 1h3v2H9z" fill="#66758a" /><path d="M0 4h3v9H0zM4.500 4h3v9h-3zM9 4h3v9H9z" fill="#b5bac2" /></svg>Columns</h4><button class="pill">TIME (ms) SINCE START</button></div>
              <div class="shelf"><h4><svg width="12" height="14" viewBox="0 0 12 14"><path d="M0 1h3v3H0zM0 6h3v3H0zM0 11h3v3H0z" fill="#66758a" /><path d="M4 1h8v3H4zM4 6h8v3H4zM4 11h8v3H4z" fill="#b5bac2" /></svg>Rows</h4><button class="pill">AVG(Roll (Degrees))</button></div>
              <figure class="plot">
                <svg viewBox="368 144 1544 839" preserveAspectRatio="xMinYMin meet" width="100%" height="100%">
                  <g stroke="#ececec">
                    {#each xTicks.slice(1) as t}<path d="M{t.x}.5 149V941" />{/each}
                    {#each yTicks as t}<path d="M416 {t.y}.5H1908" />{/each}
                  </g>
                  <path d="M462.5 151V941" stroke="#777" stroke-dasharray="1 2" />
                  <path d="M411 148.5H1908.5V941.5H416.5V149" fill="none" stroke="#d0d0d0" />
                  {#each xTicks as t}<path d="M{t.x}.5 941v5" stroke="#d0d0d0" /><text x={t.x} y="958" text-anchor="middle" class="axis">{t.label}</text>{/each}
                  {#each yTicks as t, i}<path d="M411 {t.y}.5h5" stroke="#d0d0d0" /><text x="410" y={t.y + (i === 0 ? 10 : i === 10 ? 0 : 4)} text-anchor="end" class="axis">{t.label}</text>{/each}
                  <text x="1162" y="973" text-anchor="middle" class="axis">TIME (ms) SINCE START</text>
                  <text x="0" y="0" text-anchor="middle" class="axis" transform="translate(385 543) rotate(-90)">Avg. Roll (Degrees)</text>
                  <g fill="#bccfb4">{#each cluster as [x, y]}<rect x={x - 2} y={y - 2} width="4" height="4" rx="1" />{/each}</g>
                  {#each dots as [x, y, s]}<circle cx={x} cy={y} r="2" fill={shades[s]} />{/each}
                  <g fill="none" stroke-width="1.500">{#each rings as [x, y, r, s]}<circle cx={x} cy={y} {r} stroke={shades[s]} />{/each}</g>
                </svg>
              </figure>
            </div>
          </div>
          <div class="tabs">
            {#each sheets as s, i}<button class:active={i === 5} class:dash={i === 1}>{#if i === 1}<svg width="13" height="11" viewBox="0 0 13 11" fill="none" stroke="#66758a"><path d="M.5 1h12v9H.5zM6.500 1v9M.5 5.500h12" /></svg>{/if}{s}</button>{/each}
            <button class="new first" aria-label="New worksheet"><svg width="18" height="16" viewBox="0 0 18 16" fill="none" stroke="#66758a"><path d="M6 3h10v10H2V6" /><path d="M5 12V9M9 12V7M13 12V6" stroke-width="2" /><path d="M4 0v7M0 3.500h7" stroke="#3a6cb4" stroke-width="2.500" /></svg></button>
            <button class="new" aria-label="New dashboard"><svg width="18" height="16" viewBox="0 0 18 16" fill="none" stroke="#66758a"><path d="M6 3h10v10H2V6M9 3v10M2 8h14" /><path d="M4 0v7M0 3.500h7" stroke="#3a6cb4" stroke-width="2.500" /></svg></button>
          </div>
        </main>
      </div>
      <footer class="status">
        <span class="s1">5171 marks</span><span class="s2">1 row by 1 column</span><span>SUM of AVG(Roll (Degrees)): -8,287.917</span>
        <div class="nav"><i class="w127"></i><i class="w27"></i><i class="w27"></i><i class="w47"></i><i class="w71"><svg width="62" height="12" viewBox="0 0 62 12" fill="#adb0b5"><path d="M4 1h1v10H4zM12 1v10L6 6zM27 1v10l-6-5zM37 1v10l6-5zM52 1v10l6-5zM58 1h1v10h-1z" /></svg></i><i class="w22"><svg width="8" height="12" viewBox="0 0 8 12"><path d="M0 5l4-4 4 4zM0 7l4 4 4-4z" fill="#47546b" /></svg></i></div>
      </footer>

      <aside class="showme">
        <h2><svg class="grip" width="16" height="16" viewBox="0 0 16 16"><path d="M1 1h1M1 5h5M1 9h9M1 13h14" stroke="#9aa7b3" stroke-dasharray="1.500 2.500" /></svg><svg width="17" height="14" viewBox="0 0 17 14"><path d="M1 3h3v9H1z" fill="#c08a00" /><path d="M5 1h3v11H5z" fill="#8f1f12" /><path d="M9 4h3v8H9z" fill="#2aa02a" /><path d="M13 6h3v6h-3z" fill="#2b3fe0" /><path d="M0 12h17v1.500H0z" fill="#456" /></svg>Show Me</h2>
        <div class="thumbs">
          {#each thumbs as t, i}<button aria-label={t} class:sel={i === 12} class:on={i === 15 || i === 20}>{@render thumb(i)}</button>{/each}
        </div>
        <p>For <b>lines</b> (continuous) try</p>
        <ul>
          <li>1 date <svg width="11" height="11" viewBox="0 0 11 11" fill="none" stroke="#666f7c"><path d="M.5 1.500h10v9H.5zM.5 4.500h10M3 0v3M8 0v3" /></svg></li>
          <li>0 or more <mark class="dim">dimensions</mark></li>
          <li>1 or more <mark class="mea">measures</mark></li>
        </ul>
      </aside>
    </div>

    <footer class="taskbar">
      <svg class="wall" viewBox="0 0 1920 40" preserveAspectRatio="none" aria-hidden="true">
        <defs><linearGradient id="wl"><stop offset="0" stop-color="#54463b" /><stop offset=".3" stop-color="#5c4e43" /><stop offset=".7" stop-color="#554940" /><stop offset=".715" stop-color="#6b473c" /><stop offset=".735" stop-color="#70493d" /><stop offset=".742" stop-color="#96703f" /><stop offset=".75" stop-color="#a88049" /><stop offset=".756" stop-color="#b38b52" /><stop offset=".757" stop-color="#8f7a62" /><stop offset=".86" stop-color="#9a775c" /><stop offset=".93" stop-color="#b08e5c" /><stop offset="1" stop-color="#a57b56" /></linearGradient></defs>
        <path d="M0 0h1920v40H0z" fill="url(#wl)" />
        <path d="M1460 8q40 6 80 0t90 3 90-4 100 5 90-3M1460 20q50-6 100 1t120-2 110 3 120-3M1456 32q60 4 110-2t120 3 120-4 110 4" stroke="#c0a080" stroke-opacity=".35" fill="none" stroke-width="2" />
        <path d="M1478 40V28l-5-6M1478 30l5-6M1499 40V30l4-7M1499 34l-5-5" stroke="#50502f" stroke-width="2" fill="none" /><circle cx="1501" cy="23" r="3" fill="#bf6a55" />
      </svg>
      <button class="start" aria-label="Start">{@render winLogo()}</button>
      {#each leftApps as [n, state]}<button class="app {state}" aria-label={n}>{@render app(n)}</button>{/each}
    </footer>
  </section>

  <section class="monitor">
    <div class="window chrome">
      <header class="strip">
        <div class="tab"><svg width="12" height="12" viewBox="0 0 12 12" fill="none"><path d="M2 12V1l4 7 4-7v11" stroke="#123c7c" stroke-width="2" /></svg><span>Big Data Hackathons | Uni</span><button aria-label="Close tab"><svg width="8" height="8" viewBox="0 0 8 8"><path d="M1 1l6 6M7 1L1 7" stroke="#555" stroke-width="2" /></svg></button></div>
        <button class="newtab" aria-label="New tab"></button>
        <div class="winbtns">
          <button aria-label="Minimize"><svg width="26" height="23" viewBox="0 0 26 23"><path d="M9 11h8v2H9z" fill="#222" /></svg></button>
          <button aria-label="Restore"><svg width="27" height="23" viewBox="0 0 27 23" fill="none" stroke="#222" stroke-width="1.500"><path d="M9 6.500h7v7H9z" /><path d="M11 4.500h7v7" /></svg></button>
          <button class="close" aria-label="Close"><svg width="45" height="19" viewBox="0 0 45 19"><path d="M19.500 6l6 7M25.500 6l-6 7" stroke="#fff" stroke-width="2" /></svg></button>
        </div>
      </header>
      <div class="omni">
        <button aria-label="Back"><svg width="29" height="20" viewBox="0 0 29 20" fill="none"><path d="M22 10H9M14 4l-6 6 6 6" stroke="#555" stroke-width="3" /></svg></button>
        <button aria-label="Forward"><svg width="29" height="20" viewBox="0 0 29 20" fill="none"><path d="M7 10h13M15 4l6 6-6 6" stroke="#c4c4c4" stroke-width="3" /></svg></button>
        <button aria-label="Reload"><svg width="29" height="20" viewBox="0 0 29 20" fill="none"><path d="M19 6a6 6 0 1 0 1 6" stroke="#555" stroke-width="3" /><path d="M21 2v7h-7z" fill="#555" /></svg></button>
        <button aria-label="Home"><svg width="29" height="20" viewBox="0 0 29 20"><path d="M14.500 2l8 8h-2v7h-4v-5h-4v5h-4v-7h-2zM19 2h2v4l-2-2z" fill="#555" /></svg></button>
        <label class="url">
          <svg width="12" height="16" viewBox="0 0 12 16" fill="#fff" stroke="#888"><path d="M1 1h6l4 4v10H1zM7 1v4h4" /></svg>
          <input type="text" aria-label="Address" value="csci-4830-002-2014.github.io/units/ml_2/" />
          <svg width="20" height="20" viewBox="0 0 20 20" fill="none"><path d="M10 2l2.400 5.500 6 .5-4.500 4 1.400 6L10 14.800 4.700 18l1.400-6-4.500-4 6-.5z" stroke="#888" stroke-width="1.300" /></svg>
        </label>
        <div class="ext">
          <button aria-label="LastPass"><svg width="18" height="18" viewBox="0 0 18 18"><rect width="18" height="18" rx="2" fill="#b10f22" /><path d="M0 10h18v6q0 2-2 2H2q-2 0-2-2z" fill="#8d0a18" /><path d="M9 3v12M4 6l10 6M14 6L4 12" stroke="#fff" stroke-width="2.500" /></svg></button>
          <button aria-label="Pushbullet"><svg width="18" height="18" viewBox="0 0 18 18"><circle cx="9" cy="9" r="9" fill="#3f9f4f" /><path d="M4.500 4.500h2v9h-2zM8 4.500h3q3.500 1 3.500 4.500T11 13.500H8z" fill="#fff" /></svg></button>
          <button aria-label="Cast"><svg width="20" height="18" viewBox="0 0 20 18" fill="none" stroke="#666" stroke-width="1.500"><path d="M2 6V3h16v12h-8M1 9q6 0 7 7M1 12q3 0 4 4" /></svg></button>
          <button aria-label="AdBlock"><svg width="18" height="18" viewBox="0 0 18 18"><path d="M5 0h8l5 5v8l-5 5H5l-5-5V5z" fill="#bbb" /><path d="M6 1.500h6l4.500 4.500v6L12 16.500H6L1.500 12V6z" fill="#d01616" /><path d="M6 9V5M8 8V4M10 8V4M12 9V6" stroke="#fff" stroke-width="1.500" /><path d="M5.500 8h7v3q-1 3-3.500 3t-3.500-3z" fill="#fff" /></svg></button>
          <button aria-label="Menu"><svg width="16" height="14" viewBox="0 0 16 14"><path d="M2 2h12M2 7h12M2 12h12" stroke="#555" stroke-width="3" /></svg></button>
        </div>
      </div>
      <nav class="marksbar">
        {#each bookmarks as [icon, label]}<a href="#{icon}" aria-label={label || icon}>{@render fav(icon)}{#if label}<span>{label}</span>{/if}</a>{/each}
      </nav>

      <div class="viewport">
        <div class="page">
          <article>
            <div class="frame">
              <svg viewBox="2332 85 729 208" width="100%" aria-label="Distinct count chart">
                <path d="M2379.5 85V275M2379 270.5H3059.5V85" fill="none" stroke="#d4d4d4" />
                {#each [[80, 93], [60, 137], [40, 182], [20, 226], [0, 270]] as [v, y]}
                  <path d="M2374 {y}.5h5" stroke="#d4d4d4" /><text x="2372" y={v ? y + 4 : 267} text-anchor="end" class="axis">{v}</text>
                {/each}
                {#each bars as [n, v], i}
                  <rect x={2383 + i * 40} y={270 - Math.min(v * 2.2, 190)} width="30" height={Math.min(v * 2.2, 190)} fill="#1776b6" />
                  <path d="M{2419 + i * 40}.5 271v4" stroke="#d4d4d4" /><text x={2398 + i * 40} y="284" text-anchor="middle" class="axis strong">{n}</text>
                {/each}
                <text x="0" y="0" class="axis" transform="translate(2347 146) rotate(-90)">Distinct coun</text>
              </svg>
            </div>
            <h2>Challenge 2</h2>
            <p>The second challenge is open ended. Write your own analysis of this data. Keep the analysis short (300 words max). Include visualizations to support your analysis.</p>
            <p>(As a heads up, we will do some simple classifier training on this data next week).</p>
          </article>
          <footer class="site">
            <div class="cols">
              <section><h3>COURSE INFORMATION</h3>
                <p><b>Time:</b> Mon. 5:15pm - 7:45pm</p>
                <p><b>Location:</b> ATLAS 2nd floor lounge</p>
                <p><b>Instructors:</b> <a href="#tom">Tom Yeh</a>, <a href="#mike">Mike Skirpan</a></p>
                <p><b>Email:</b> tom.yeh@colorado.edu,<br />michael.skirpan@colorado.edu</p>
              </section>
              <section><h3>OFFICE HOURS</h3>
                <p><b>Mike Skirpan:</b> Tuesday 2-3 or by appointment</p>
                <p><b>Where:</b> DLC 170</p>
              </section>
            </div>
            <div class="legal"><p>© 2014. All Rights Reserved.</p></div>
          </footer>
          <a class="totop" href="#top" aria-label="Back to top"><svg width="16" height="14" viewBox="0 0 16 14" fill="none"><path d="M2 11l6-7 6 7" stroke="#e6e8e9" stroke-width="4" /></svg></a>
        </div>
        <div class="vbar">
          <svg width="17" height="18" viewBox="0 0 17 18"><path d="M5 11h8l-4-5z" fill="#555" /></svg>
          <div class="track"><div class="thumb"></div></div>
          <svg width="17" height="16" viewBox="0 0 17 16"><path d="M5 6h8l-4 5z" fill="#999" /></svg>
        </div>
      </div>

      <div class="downloads">
        <div class="item">
          <button><svg width="18" height="18" viewBox="0 0 18 18"><path d="M1 1l12 0 4 3v12l-12 1-4-3z" fill="#4a1230" /><path d="M4 4h13v3H4z" fill="#8c1b63" /><path d="M4 9h13v3H4z" fill="#2a66c8" /><path d="M4 14h13v3H4z" fill="#1f9e4a" /><path d="M4 7.500h13M4 12.500h13" stroke="#eee" /></svg>raw_touch_data.xls.zip</button>
          <button class="more" aria-label="Download options"><svg width="8" height="6" viewBox="0 0 8 6"><path d="M1 1h6L4 5z" fill="#666" /></svg></button>
        </div>
        <div class="all"><svg width="12" height="14" viewBox="0 0 12 14"><path d="M3 0h6v7h3l-6 6-6-6h3z" fill="#666" /></svg><a href="#downloads">Show all downloads...</a><button aria-label="Close bar"><svg width="8" height="8" viewBox="0 0 8 8"><path d="M1 1l6 6M7 1L1 7" stroke="#555" stroke-width="2" /></svg></button></div>
      </div>
    </div>

    <footer class="taskbar second">
      <svg class="wall" viewBox="1920 0 1920 40" preserveAspectRatio="none" aria-hidden="true">
        <defs><linearGradient id="wr"><stop offset="0" stop-color="#a08a78" /><stop offset=".06" stop-color="#8d7b6b" /><stop offset=".1" stop-color="#6d5a4b" /><stop offset=".25" stop-color="#645143" /><stop offset=".34" stop-color="#7b6452" /><stop offset=".42" stop-color="#75604f" /><stop offset=".5" stop-color="#604d40" /><stop offset=".64" stop-color="#6b594b" /><stop offset=".7" stop-color="#6a5748" /></linearGradient>
          <linearGradient id="wt"><stop offset="0" stop-color="#b6a391" /><stop offset=".5" stop-color="#ad9b8b" /><stop offset="1" stop-color="#a89989" /></linearGradient></defs>
        <path d="M1920 0h1920v40H1920z" fill="url(#wr)" />
        <path d="M1920 0h130l-80 40h-50z" fill="#b3a191" opacity=".6" />
        <path d="M2408 0h62l20 40h-50z" fill="#857c76" /><path d="M2850 0h36l-28 40h-64z" fill="#8b8580" />
        <path d="M3148 0h692v40H3256z" fill="url(#wt)" />
      </svg>
      <button class="start" aria-label="Start">{@render winLogo()}</button>
      {#each rightApps as [n, state, label]}<button class="app {state}" class:wide={label} aria-label={n}>{@render app(n)}{#if label}<span>{label}</span>{/if}</button>{/each}
      <div class="tray">
        <span class="ac">A/C</span>
        <svg width="10" height="8" viewBox="0 0 10 8"><path d="M1 6h8L5 1z" fill="#fff" stroke="#666" stroke-width=".5" /></svg>
        <svg width="18" height="18" viewBox="0 0 18 18"><path d="M5 1l4 3-4 3-4-3zM13 1l4 3-4 3-4-3zM5 7l4 3-4 3-4-3zM13 7l4 3-4 3-4-3zM9 11l4 3-4 3-4-3z" fill="#7cc3ef" stroke="#2b7ebf" stroke-width=".6" /><circle cx="13" cy="13" r="4" fill="#3a9b34" /><path d="M11 13l2 2 2-4" stroke="#fff" fill="none" /></svg>
        <svg width="16" height="14" viewBox="0 0 16 14"><path d="M1 10h2v3H1zM4 8h2v5H4zM7 6h2v7H7zM10 3h2v10h-2zM13 1h2v12h-2z" fill="#fff" stroke="#555" stroke-width=".4" /></svg>
        <svg width="18" height="16" viewBox="0 0 18 16"><path d="M1 5h3l4-4v14l-4-4H1z" fill="#fff" stroke="#666" stroke-width=".5" /><path d="M10 5q2 3 0 6M13 3q3 5 0 10M15.500 1q4 7 0 14" stroke="#fff" fill="none" /></svg>
        <time>11:43 AM<br />11/1/2014</time>
      </div>
    </footer>
  </section>
</div>

<style>
  :global(body) { margin: 0; }
  * { box-sizing: border-box; }
  .desktop { display: grid; grid-template-columns: 1fr 1fr; height: 100vh; overflow: hidden; font-family: 'Open Sans', 'Noto Sans', sans-serif; font-size: 11px; line-height: 16px; color: #111; }
  .monitor { display: flex; flex-direction: column; min-width: 0; min-height: 0; }
  .window { position: relative; flex: 1; min-height: 0; display: flex; flex-direction: column; background: #efefef; }
  button { font: inherit; color: inherit; background: none; border: 0; padding: 0; margin: 0; }
  h1, h2, h3, h4, p, ul, figure { margin: 0; padding: 0; font-weight: 400; font-size: inherit; }
  ul { list-style: none; }
  svg { display: block; flex: none; }
  select { appearance: none; border: 0; background: none; font: inherit; color: inherit; flex: 1; min-width: 0; padding: 0; outline: 0; }
  .t7 { font-size: 7px; font-family: 'Liberation Mono', monospace; }
  .t8 { font-size: 8px; }
  .t9 { font-size: 9px; }
  .t11 { font-size: 11px; }
  .t12 { font-size: 12px; font-weight: 700; }
  .mono { font: 700 9px 'Liberation Mono', monospace; }
  .axis { font: 11px 'Liberation Sans', Arial, sans-serif; fill: #5c5c5c; }
  .strong { font-weight: 700; fill: #555; }

  .titlebar { display: grid; grid-template-columns: 1fr auto 1fr; align-items: center; height: 23px; background: #d8b595; border-bottom: 1px solid #b3977e; flex: none; }
  .book { padding-left: 2px; }
  .titlebar h1 { font-size: 14px; color: #333; }
  .winbtns { display: flex; justify-content: flex-end; align-self: start; padding-right: 3px; }
  .titlebar .close { background: #c75050; height: 18px; }
  .menubar { display: flex; align-items: center; height: 20px; background: #f5f6f7; padding-left: 8px; gap: 17px; flex: none; border-bottom: 1px solid #e8e8e8; }
  .modes { display: flex; gap: 2px; margin-left: auto; align-self: flex-end; padding-right: 14px; }
  .modes button { border: 1px solid #777; border-bottom: 0; border-radius: 5px 5px 0 0; background: #fff; }
  .modes .sorter { background: #f1f1ea; }
  .modes .grid { background: #e0e5f2; border-color: #9aa3b5; }
  .toolbar { display: flex; align-items: center; height: 33px; border-bottom: 2px solid #777; flex: none; }
  .fit { display: flex; align-items: center; width: 84px; height: 21px; margin-left: 4px; border: 1px solid #a8a8a8; background: #fff; padding: 0 4px 0 3px; }

  .body { flex: 1; min-height: 0; display: flex; }
  .datapane { width: 202px; flex: none; display: flex; flex-direction: column; border-right: 2px solid #777; background: #efefef; }
  .datapane h2 { display: flex; justify-content: space-between; align-items: center; height: 19px; padding: 0 11px 0 3px; background: #dcdcdc; border-bottom: 1px solid #aaa; font-weight: 600; }
  .source { display: flex; align-items: center; height: 21px; padding-left: 8px; white-space: nowrap; }
  .datapane h3 { display: flex; justify-content: space-between; align-items: center; height: 21px; padding: 0 8px 0 3px; background: #e6e6e6; flex: none; }
  .fields li { display: flex; align-items: center; gap: 10px; height: 17px; padding-left: 7px; white-space: nowrap; }
  .fields .calc { font-style: italic; }
  .dims { flex: 1; background: #fff; margin-right: 4px; }
  .meas { display: flex; background: #fff; height: 431px; margin-right: 4px; overflow: hidden; }
  .meas .fields { flex: 1; }
  .scroll { width: 15px; display: flex; flex-direction: column; background: #f0f0f0; margin-right: 1px; }
  .scroll .thumb { flex: 1; margin-top: 31px; background: #cdcdcd; }

  .work { flex: 1; min-width: 0; display: flex; flex-direction: column; background: #e6e6e6; }
  .sheet { flex: 1; min-height: 0; display: flex; gap: 7px; padding: 6px 8px 0 6px; }
  .cards { width: 153px; flex: none; display: flex; flex-direction: column; gap: 6px; }
  .card { background: #fcfcfc; border-radius: 4px 4px 0 0; box-shadow: 0 1px 2px #999; }
  .card h4 { height: 18px; line-height: 19px; padding-left: 5px; background: #f2f2f2; border-radius: 4px 4px 0 0; white-space: nowrap; }
  .pages { height: 56px; }
  .filters { height: 68px; }
  .marks { height: 249px; }
  .prox { height: 100px; }
  .light { height: 55px; }
  .marktype { display: flex; align-items: center; gap: 4px; height: 21px; margin: 8px 6px 9px; border: 1px solid #aaa; padding: 0 4px 0 6px; }
  .markbtns { display: grid; grid-template-columns: repeat(3, 42px); justify-content: space-between; gap: 8px; padding: 0 6px; }
  .markbtns button { display: flex; flex-direction: column; align-items: center; justify-content: center; gap: 2px; height: 42px; border: 1px solid #aaa; border-radius: 4px; background: #fff; color: #444; }
  .abc { font-size: 9px; line-height: 8px; color: #66758a; text-align: center; }
  .encodings { display: grid; grid-template-columns: 16px 1fr; gap: 3px 5px; align-items: center; padding: 7px 6px 0; }
  .pill { height: 20px; border: 1px solid #aacdb8; border-radius: 7px; background: #bcdec9; text-align: left; padding-left: 6px; white-space: nowrap; overflow: hidden; }
  .pill.blue { background: #c6dbf3; border-color: #a9c3e3; }
  .prox li { display: flex; align-items: center; height: 20px; padding-left: 4px; color: #555; }
  .prox span { width: 32px; text-align: right; }
  .ramp { height: 16px; margin: 4px 5px 0; border: 1px solid #999; background: linear-gradient(90deg, #bccfb4, #36994a 50%, #09622a); }
  .light p { display: flex; justify-content: space-between; padding: 0 5px; color: #555; }

  .view { flex: 1; min-width: 0; display: flex; flex-direction: column; gap: 6px; }
  .shelf { display: flex; align-items: center; height: 25px; background: #fcfcfc; border-radius: 4px 0 0 0; box-shadow: 0 1px 1px #b5b5b5; flex: none; }
  .shelf h4 { display: flex; align-items: center; gap: 5px; width: 94px; height: 25px; padding-left: 5px; background: #f2f2f2; border-radius: 4px 0 0 0; margin-right: 2px; }
  .shelf .pill { width: 148px; }
  .plot { flex: 1; min-height: 0; background: #fff; }
  .tabs { display: flex; align-items: flex-start; gap: 4px; height: 31px; margin-top: 7px; flex: none; border-top: 1px solid #9a9a9a; background: #efefef; padding-left: 2px; }
  .tabs button { display: flex; align-items: center; justify-content: center; gap: 8px; width: 70px; height: 27px; border: 1px solid #aaa; border-top: 0; border-radius: 0 0 8px 8px; }
  .tabs .dash { width: 111px; }
  .tabs .active { background: #fff; font-weight: 600; }
  .tabs .new { width: 32px; background: #e4e4e4; }
  .tabs .first { margin-left: 4px; }
  .status { display: flex; height: 19px; align-items: center; border-top: 1px solid #888; padding-left: 3px; flex: none; }
  .s1 { width: 80px; }
  .s2 { width: 119px; }
  .nav { display: flex; margin-left: auto; height: 18px; }
  .nav i { display: flex; align-items: center; border-left: 1px solid #ccc; padding-left: 7px; }
  .w127 { width: 127px; }
  .w27 { width: 27px; }
  .w47 { width: 47px; }
  .w71 { width: 71px; }
  .w22 { width: 22px; }

  .showme { position: absolute; top: 50px; right: 16px; width: 168px; height: 411px; background: #fff; border: 1px solid #999; border-radius: 4px 4px 0 0; box-shadow: 1px 2px 3px #aaa; }
  .showme h2 { display: flex; align-items: center; gap: 8px; height: 23px; padding-left: 3px; background: #deebf5; border-bottom: 1px solid #b5c3ce; border-radius: 4px 4px 0 0; }
  .showme .grip { margin-right: 20px; }
  .thumbs { display: grid; grid-template-columns: repeat(3, 42px); gap: 6px 11px; padding: 6px 9px 0; }
  .thumbs button { height: 28px; border: 1px solid #ddd; }
  .thumbs .sel { border: 2px solid #4aa3ff; }
  .thumbs .on { border-color: #aaa; }
  .showme p { margin: 7px 0 1px 7px; }
  .showme li { display: flex; align-items: center; gap: 3px; height: 17px; padding-left: 13px; }
  mark { color: inherit; line-height: 15px; }
  .dim { background: #dbe9fb; }
  .mea { background: #cdeedb; }

  .taskbar { position: relative; display: flex; align-items: stretch; gap: 4px; height: 40px; flex: none; color: #fff; overflow: hidden; }
  .wall { position: absolute; inset: 0; width: 100%; height: 100%; }
  .start { position: relative; width: 48px; display: flex; align-items: center; justify-content: center; }
  .app { position: relative; width: 58px; display: flex; align-items: center; justify-content: center; gap: 6px; margin: 1px 0; border: 1px solid transparent; }
  .app.open { background: rgba(255, 255, 255, .22); border-color: rgba(255, 255, 255, .3); }
  .app.active { background: rgba(255, 255, 255, .38); border-color: #f0ece8; }
  .app.wide { width: 158px; justify-content: flex-start; padding-left: 8px; gap: 4px; font-size: 11px; white-space: nowrap; }
  .tray { position: relative; display: flex; align-items: center; gap: 8px; margin-left: auto; padding-right: 16px; }
  .ac { width: 56px; height: 25px; line-height: 23px; background: #000; border: 1px solid #eee; text-align: center; margin-right: 4px; font-size: 12px; }
  time { text-align: center; line-height: 17px; margin-left: 6px; }

  .strip { display: flex; height: 25px; background: #e9e9e9; border-bottom: 1px solid #aaa; flex: none; }
  .tab { position: relative; display: flex; align-items: center; gap: 8px; width: 196px; height: 25px; margin-left: 5px; padding: 2px 10px 0 14px; background: #fbfbfb; border: 1px solid #aaa; border-bottom: 0; border-radius: 6px 6px 0 0; white-space: nowrap; }
  .tab button { margin-left: auto; }
  .newtab { width: 26px; height: 15px; margin: 5px 0 0 4px; background: #d5dae1; border: 1px solid #bfc3c9; border-radius: 3px; transform: skewX(20deg); }
  .strip .winbtns { margin-left: auto; }
  .strip .close { background: #bcbcbc; height: 19px; }
  .omni { display: flex; align-items: center; height: 35px; padding-left: 4px; background: linear-gradient(#fbfbfb, #ececec); flex: none; }
  .url { flex: 1; display: flex; align-items: center; gap: 6px; height: 27px; margin-left: 4px; padding: 0 3px 0 6px; background: #fff; border: 1px solid #b5b5b5; border-radius: 3px; }
  .url input { flex: 1; min-width: 0; border: 0; outline: 0; padding: 0; font: 15px/22px 'Open Sans', 'Noto Sans', sans-serif; color: transparent; background: linear-gradient(90deg, #222 204px, #8a8a8a 204px); background-clip: text; }
  .ext { display: flex; align-items: center; gap: 14px; padding: 0 8px 0 9px; }
  .marksbar { display: flex; align-items: center; gap: 13px; height: 25px; padding: 0 0 4px 6px; background: linear-gradient(#ececec, #dedede); border-bottom: 1px solid #aaa; flex: none; }
  .marksbar a { display: flex; align-items: center; gap: 5px; color: #222; text-decoration: none; white-space: nowrap; }

  .viewport { flex: 1; min-height: 0; display: flex; }
  .page { position: relative; flex: 1; min-width: 0; display: flex; flex-direction: column; background: #fff; overflow: hidden; font-family: 'Liberation Sans', Arial, sans-serif; }
  article { width: 1100px; max-width: 100%; margin: 0 auto; height: 452px; color: #676e76; font-size: 17px; line-height: 22px; flex: none; }
  .frame { width: 749px; padding: 0 7px 7px; border: 1px solid #ccc; border-top: 0; background: #f9f9f9; }
  .frame svg { background: #fff; border: 2px solid #e6e6e6; border-top: 0; height: 210px; }
  article h2 { font: 300 26px/36px 'Open Sans Light', 'Open Sans', sans-serif; color: #2a2f35; margin: 41px 0 11px; }
  article p { width: 730px; margin-bottom: 20px; }
  .site { flex: 1; display: flex; flex-direction: column; background: #202020; border-top: 5px solid #e3e5e5; color: #666d73; font-size: 15px; line-height: 22px; }
  .cols { width: 1100px; max-width: 100%; margin: 0 auto; display: flex; gap: 20px; padding-top: 52px; height: 368px; }
  .cols section { width: 353px; }
  .cols h3 { font: 600 13px/20px 'Open Sans', sans-serif; color: #d2d4d6; text-align: center; padding-bottom: 9px; border-bottom: 4px solid #26292c; margin-bottom: 43px; }
  .cols p { margin-bottom: 20px; }
  .cols a { color: #c9ccce; text-decoration: none; }
  .legal { border-top: 5px solid #26292c; padding-top: 29px; font-size: 12px; }
  .legal p { width: 1100px; max-width: 100%; margin: 0 auto; }
  .totop { position: absolute; right: 32px; bottom: 48px; width: 32px; height: 31px; display: flex; align-items: center; justify-content: center; border-radius: 3px; background: #788386; }
  .vbar { width: 17px; display: flex; flex-direction: column; background: #f1f1f1; }
  .track { flex: 1; display: flex; flex-direction: column; justify-content: flex-end; }
  .vbar .thumb { height: 27%; margin: 0 2px; background: #c1c1c1; border: 1px solid #a8a8a8; }
  .downloads { display: flex; align-items: center; justify-content: space-between; height: 43px; padding: 0 15px 0 4px; background: #dedede; border-top: 1px solid #cfcfcf; flex: none; }
  .item { display: flex; width: 204px; height: 35px; border: 1px solid #aaa; border-radius: 3px; background: linear-gradient(#f6f6f6, #e8e8e8); }
  .item button { flex: 1; display: flex; align-items: center; gap: 10px; padding-left: 8px; }
  .item .more { flex: none; width: 13px; padding-left: 2px; border-left: 1px solid #ccc; }
  .all { display: flex; align-items: center; gap: 7px; }
  .all a { color: #222; }
  .all button { margin-left: 14px; }
</style>
